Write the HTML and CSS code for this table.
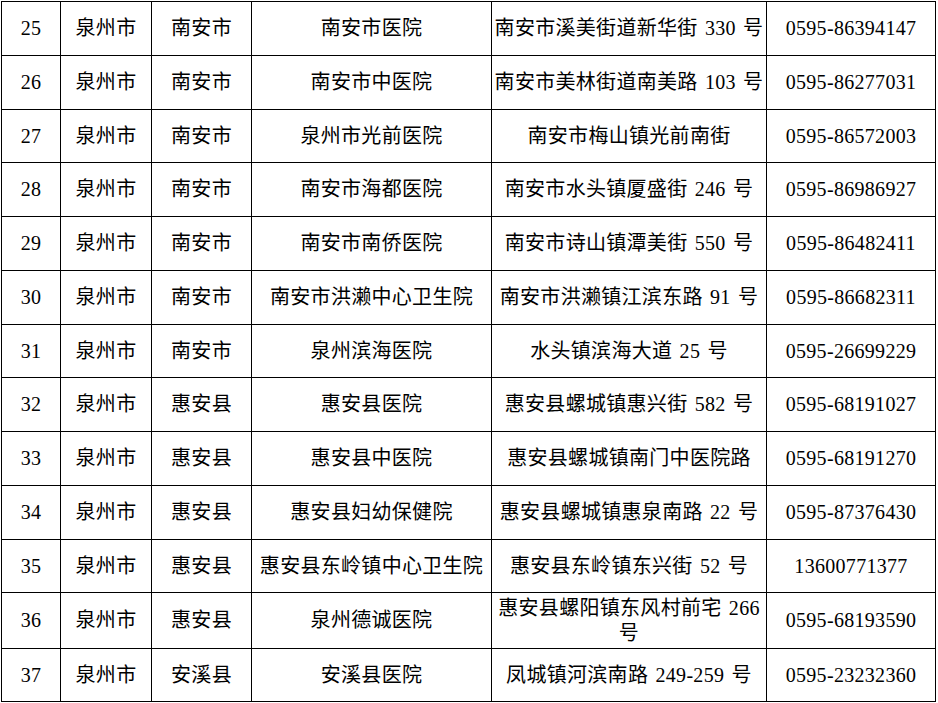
FILE: index.html
```html
<!DOCTYPE html>
<html lang="zh-CN">
<head>
<meta charset="utf-8">
<title>医院名单</title>
<link rel="stylesheet" href="styles.css">
</head>
<body>
<div class="sheet" role="table">
  <div class="cell">25</div><div class="cell">泉州市</div><div class="cell">南安市</div><div class="cell">南安市医院</div><div class="cell">南安市溪美街道新华街 330 号</div><div class="cell">0595-86394147</div>
  <div class="cell">26</div><div class="cell">泉州市</div><div class="cell">南安市</div><div class="cell">南安市中医院</div><div class="cell">南安市美林街道南美路 103 号</div><div class="cell">0595-86277031</div>
  <div class="cell">27</div><div class="cell">泉州市</div><div class="cell">南安市</div><div class="cell">泉州市光前医院</div><div class="cell">南安市梅山镇光前南街</div><div class="cell">0595-86572003</div>
  <div class="cell">28</div><div class="cell">泉州市</div><div class="cell">南安市</div><div class="cell">南安市海都医院</div><div class="cell">南安市水头镇厦盛街 246 号</div><div class="cell">0595-86986927</div>
  <div class="cell">29</div><div class="cell">泉州市</div><div class="cell">南安市</div><div class="cell">南安市南侨医院</div><div class="cell">南安市诗山镇潭美街 550 号</div><div class="cell">0595-86482411</div>
  <div class="cell">30</div><div class="cell">泉州市</div><div class="cell">南安市</div><div class="cell">南安市洪濑中心卫生院</div><div class="cell">南安市洪濑镇江滨东路 91 号</div><div class="cell">0595-86682311</div>
  <div class="cell">31</div><div class="cell">泉州市</div><div class="cell">南安市</div><div class="cell">泉州滨海医院</div><div class="cell">水头镇滨海大道 25 号</div><div class="cell">0595-26699229</div>
  <div class="cell">32</div><div class="cell">泉州市</div><div class="cell">惠安县</div><div class="cell">惠安县医院</div><div class="cell">惠安县螺城镇惠兴街 582 号</div><div class="cell">0595-68191027</div>
  <div class="cell">33</div><div class="cell">泉州市</div><div class="cell">惠安县</div><div class="cell">惠安县中医院</div><div class="cell">惠安县螺城镇南门中医院路</div><div class="cell">0595-68191270</div>
  <div class="cell">34</div><div class="cell">泉州市</div><div class="cell">惠安县</div><div class="cell">惠安县妇幼保健院</div><div class="cell">惠安县螺城镇惠泉南路 22 号</div><div class="cell">0595-87376430</div>
  <div class="cell">35</div><div class="cell">泉州市</div><div class="cell">惠安县</div><div class="cell">惠安县东岭镇中心卫生院</div><div class="cell">惠安县东岭镇东兴街 52 号</div><div class="cell">13600771377</div>
  <div class="cell">36</div><div class="cell">泉州市</div><div class="cell">惠安县</div><div class="cell">泉州德诚医院</div><div class="cell">惠安县螺阳镇东风村前宅 266 号</div><div class="cell">0595-68193590</div>
  <div class="cell">37</div><div class="cell">泉州市</div><div class="cell">安溪县</div><div class="cell">安溪县医院</div><div class="cell">凤城镇河滨南路 249-259 号</div><div class="cell">0595-23232360</div>
</div>
</body>
</html>
```

FILE: styles.css
```css
html, body {
  margin: 0;
  padding: 0;
  background: #ffffff;
}

body {
  font-family: "Liberation Serif", "Noto Sans CJK SC", serif;
  font-size: 20px;
  color: #000000;
}

.sheet {
  display: grid;
  grid-template-columns: 59px 91px 100px 240px 275px 169px;
  grid-template-rows: 54px 54px 53px 54px 54px 54px 53px 54px 54px 54px 53px 56px 53px;
  margin: 1px 0 0 1px;
  width: max-content;
  border-left: 1px solid #000;
  border-top: 1px solid #000;
}

.cell {
  box-sizing: border-box;
  display: flex;
  align-items: center;
  justify-content: center;
  text-align: center;
  border-right: 1px solid #000;
  border-bottom: 1px solid #000;
  line-height: 25px;
  word-spacing: 2px;
  letter-spacing: 0.3px;
  padding: 0;
  overflow: hidden;
}
```
